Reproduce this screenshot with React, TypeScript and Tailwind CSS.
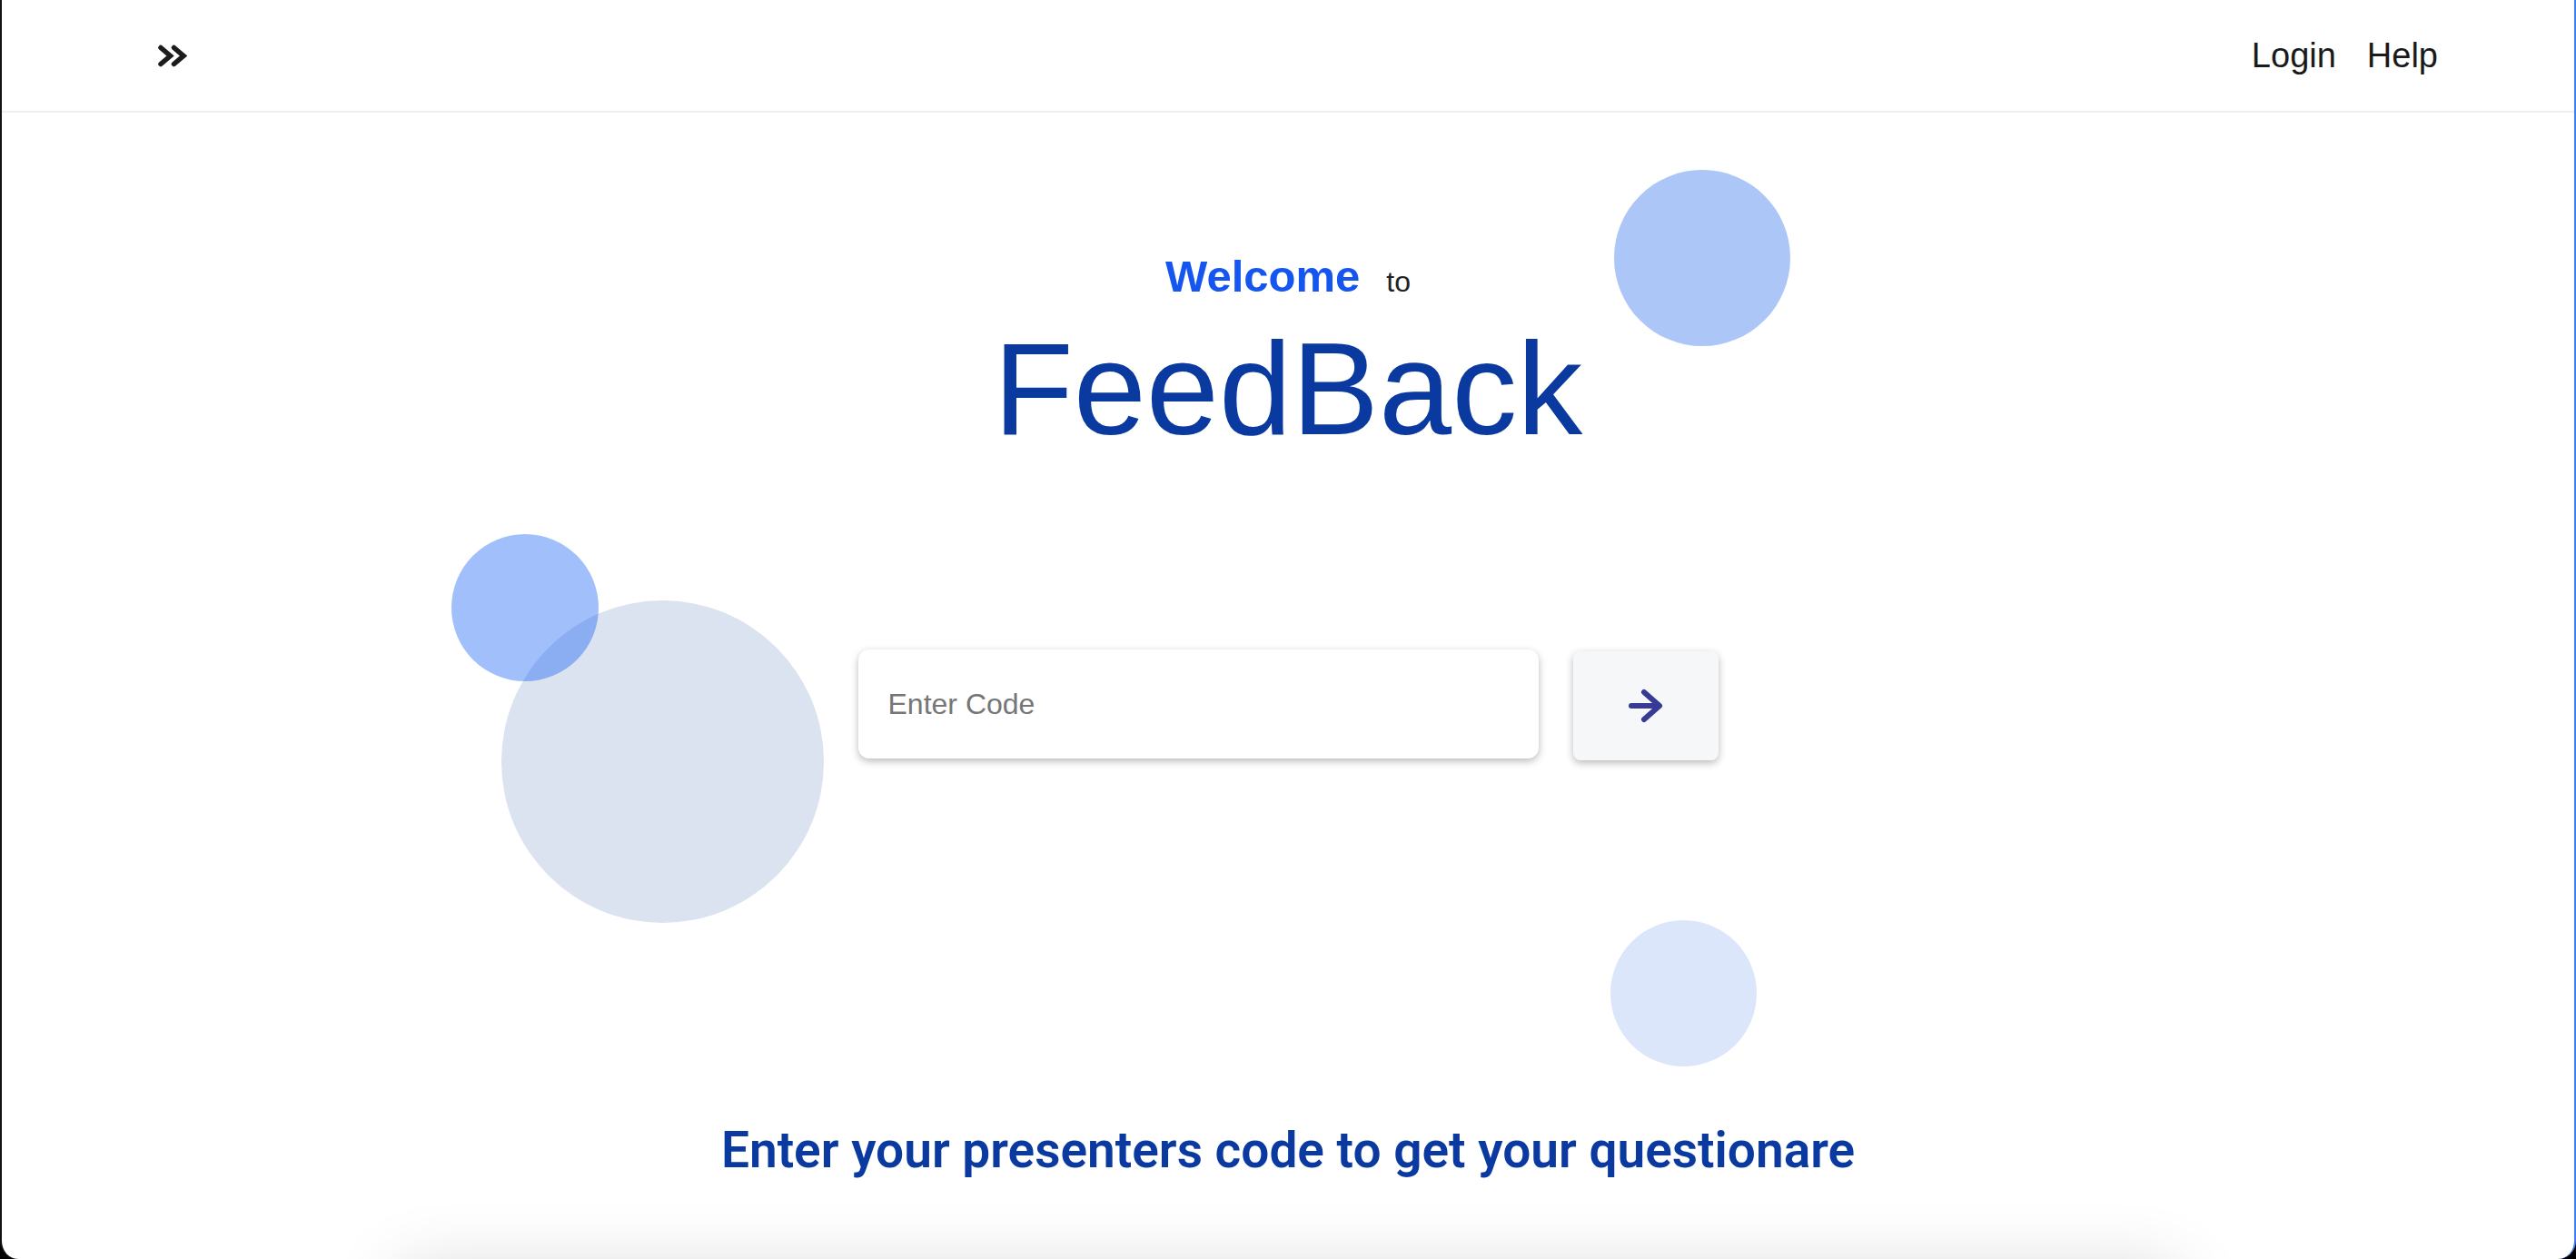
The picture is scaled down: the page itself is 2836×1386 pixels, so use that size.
import React, { useState } from "react";

const ChevronsIcon = () => (
  <svg width="32" height="25" viewBox="0 0 32 25" fill="none">
    <polyline points="3,3.5 13.5,12.5 3,21.5" stroke="#1c1c1c" strokeWidth="5.5" strokeLinecap="round" strokeLinejoin="miter" />
    <polyline points="17.5,3.5 28,12.5 17.5,21.5" stroke="#1c1c1c" strokeWidth="5.5" strokeLinecap="round" strokeLinejoin="miter" />
  </svg>
);

const ArrowIcon = () => (
  <svg width="40" height="38" viewBox="0 0 40 38" fill="none">
    <line x1="4" y1="19" x2="34" y2="19" stroke="#373b94" strokeWidth="6" strokeLinecap="round" />
    <polyline points="18,4 35,19 18,34" stroke="#373b94" strokeWidth="6" strokeLinecap="round" strokeLinejoin="round" />
  </svg>
);

const App = () => {
  const [code, setCode] = useState("");

  return (
    <div className="h-[1386px] w-full bg-black overflow-hidden">
      <div
        className="relative h-full w-full bg-white rounded-b-[20px] border-l-2 border-r-2 border-l-[#111] border-r-[#3d7ef0] overflow-hidden"
        style={{ fontFamily: '"Liberation Sans", Arial, sans-serif' }}
      >
        {/* decorative bubbles */}
        <div className="absolute left-[1775px] top-[187px] w-[194px] h-[194px] rounded-full bg-[#abc6f7]" />
        <div className="absolute left-[550px] top-[661px] w-[355px] h-[355px] rounded-full bg-[#dbe2f0]" />
        <div className="absolute left-[495px] top-[588px] w-[162px] h-[162px] rounded-full bg-[#1560f2]/40" />
        <div className="absolute left-[1771px] top-[1013px] w-[161px] h-[161px] rounded-full bg-[#dce6fb]" />

        <header className="relative flex items-center justify-between h-[124px] pl-[172px] pr-[150px] border-b-2 border-[#efefef]">
          <ChevronsIcon />
          <nav className="flex items-center gap-[34px] text-[38px] leading-none text-[#1a1a1a]">
            <span>Login</span>
            <span>Help</span>
          </nav>
        </header>

        <main className="relative flex flex-col items-center">
          <div className="flex items-baseline gap-[29px] mt-[156px] leading-none">
            <span className="text-[49px] font-bold text-[#1556f0]">Welcome</span>
            <span className="text-[32px] text-[#222]">to</span>
          </div>

          <h1 className="mt-[28px] text-[144px] leading-none text-[#0a3aa0]">FeedBack</h1>

          <div className="flex items-center gap-[38px] mt-[212px]">
            <input
              type="text"
              value={code}
              onChange={(e) => setCode(e.target.value)}
              placeholder="Enter Code"
              className="w-[749px] h-[120px] rounded-[12px] bg-white px-[33px] text-[32px] text-[#222] placeholder:text-[#767676] shadow-[0_3px_8px_rgba(0,0,0,0.28)] outline-none"
            />
            <button className="mt-[4px] w-[160px] h-[120px] rounded-[8px] bg-[#f6f7f9] flex items-center justify-center shadow-[0_3px_8px_rgba(0,0,0,0.28)]">
              <ArrowIcon />
            </button>
          </div>

          <p
            className="mt-[402px] text-[55px] leading-none font-semibold text-[#0a3aa0]"
            style={{ fontFamily: "Roboto, sans-serif" }}
          >
            Enter your presenters code to get your questionare
          </p>

          <div className="mt-[105px] w-[1960px] h-[400px] rounded-[20px] bg-white shadow-[0_0_80px_rgba(0,0,0,0.16)]" />
        </main>
      </div>
    </div>
  );
};

export default App;
